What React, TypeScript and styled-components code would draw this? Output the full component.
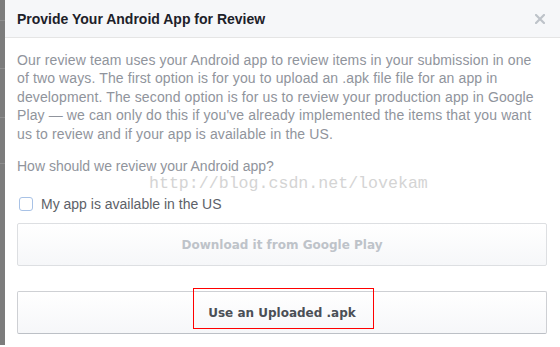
import React from 'react'
import styled, { createGlobalStyle } from 'styled-components'

const GlobalStyle = createGlobalStyle`
  html, body {
    margin: 0;
    padding: 0;
    background: #ffffff;
  }
  body {
    font-family: "Liberation Sans", Arial, Helvetica, sans-serif;
  }
`

const introLines = [
  'Our review team uses your Android app to review items in your submission in one',
  'of two ways. The first option is for you to upload an .apk file file for an app in',
  'development. The second option is for us to review your production app in Google',
  "Play — we can only do this if you've already implemented the items that you want",
  'us to review and if your app is available in the US.'
]

export default function App() {
  return (
    <>
      <GlobalStyle />
      <Page>
        <Backdrop>
          <BackdropRow $h={20} />
          <BackdropRow $h={47} />
          <BackdropRow $h={48} />
          <BackdropRow $h={45} />
          <BackdropRow $h={185} />
        </Backdrop>
        <Dialog>
          <Header>
            <Title>Provide Your Android App for Review</Title>
            <CloseButton aria-label="Close">
              <svg width="10" height="10" viewBox="0 0 10 10">
                <path d="M1 1 L9 9 M9 1 L1 9" stroke="#bec3c9" strokeWidth="2.2" strokeLinecap="square" />
              </svg>
            </CloseButton>
          </Header>
          <Body>
            <Intro>
              {introLines.map((line, i) => (
                <IntroLine key={i}>{line}</IntroLine>
              ))}
            </Intro>
            <Question>How should we review your Android app?</Question>
            <CheckRow>
              <CheckBox type="checkbox" />
              <span>My app is available in the US</span>
            </CheckRow>
            <Actions>
              <ActionButton $disabled>Download it from Google Play</ActionButton>
              <ActionButton>Use an Uploaded .apk</ActionButton>
            </Actions>
            <Watermark>http://blog.csdn.net/lovekam</Watermark>
            <Highlight />
          </Body>
        </Dialog>
      </Page>
    </>
  )
}

const Page = styled.div`
  display: flex;
  width: 560px;
  height: 345px;
  overflow: hidden;
`

const Backdrop = styled.div`
  width: 5px;
  display: flex;
  flex-direction: column;
  background: #7c7c7c;
`

const BackdropRow = styled.div<{ $h: number }>`
  height: ${({ $h }) => $h}px;
  border-bottom: 1px solid #8e8e8e;
  flex-shrink: 0;
`

const Dialog = styled.div`
  flex: 1;
  display: flex;
  flex-direction: column;
  background: #ffffff;
`

const Header = styled.div`
  height: 38px;
  box-sizing: border-box;
  display: flex;
  align-items: center;
  justify-content: space-between;
  padding: 0 13px 0 12px;
  background: #f6f7f9;
  border-bottom: 1px solid #e5e5e5;
`

const Title = styled.div`
  font-size: 14px;
  font-weight: bold;
  color: #1d2129;
  line-height: 18px;
`

const CloseButton = styled.div`
  width: 10px;
  height: 10px;
  display: flex;
  margin-right: 2px;
  margin-top: 1px;
`

const Body = styled.div`
  position: relative;
  flex: 1;
  padding: 13px 13px 0 12px;
  font-size: 14px;
  color: #90949c;
`

const Intro = styled.div`
  margin: 0;
  line-height: 18.4px;
  letter-spacing: 0.12px;
`

const IntroLine = styled.div`
  white-space: nowrap;
`

const Question = styled.p`
  margin: 14px 0 0;
  line-height: 18px;
`

const CheckRow = styled.label`
  display: flex;
  align-items: center;
  gap: 8px;
  margin-top: 20px;
  height: 18px;
  color: #5d6168;
  line-height: 18px;
`

const CheckBox = styled.input`
  appearance: none;
  width: 14px;
  height: 14px;
  margin: 0 0 0 2px;
  box-sizing: border-box;
  border: 1px solid #a8c2e6;
  border-radius: 3px;
  background: #ffffff;
`

const Actions = styled.div`
  display: flex;
  flex-direction: column;
  gap: 25px;
  margin-top: 10px;
`

const ActionButton = styled.div<{ $disabled?: boolean }>`
  height: 43px;
  box-sizing: border-box;
  display: flex;
  align-items: center;
  justify-content: center;
  font-family: "DejaVu Sans", Verdana, sans-serif;
  font-size: 12px;
  font-weight: bold;
  border: 1px solid ${({ $disabled }) => ($disabled ? '#dddfe2' : '#ced0d4')};
  border-bottom-color: ${({ $disabled }) => ($disabled ? '#dddfe2' : '#bcc0c6')};
  border-radius: 2px;
  background: linear-gradient(#ffffff, #f6f7f9);
  color: ${({ $disabled }) => ($disabled ? '#bec3c9' : '#4b4f56')};
`

const Watermark = styled.div`
  position: absolute;
  left: 144px;
  top: 136px;
  font-family: "Liberation Mono", "Courier New", monospace;
  font-size: 16.6px;
  line-height: 19px;
  color: #d4d4d4;
  pointer-events: none;
`

const Highlight = styled.div`
  position: absolute;
  left: 188px;
  top: 250px;
  width: 181px;
  height: 41px;
  box-sizing: border-box;
  border: 1px solid #ff0000;
  pointer-events: none;
`
